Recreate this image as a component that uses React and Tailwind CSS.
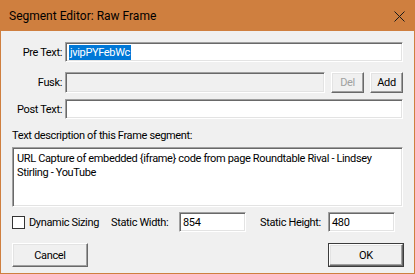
import React from 'react';

const font = { fontFamily: 'Roboto, "Noto Sans", sans-serif' };

const sunken = 'bg-white border border-t-[#a0a0a0] border-l-[#a0a0a0] border-b-white border-r-white shadow-[inset_1px_1px_0_#696969,inset_-1px_-1px_0_#e3e3e3]';
const raised = 'bg-[#f0f0f0] border border-t-white border-l-white border-b-[#696969] border-r-[#696969] shadow-[inset_-1px_-1px_0_#a0a0a0,inset_1px_1px_0_#e3e3e3]';

function Field({ className = '', children }) {
    return (
        <div className={`${sunken} h-[20px] flex items-center pl-[3px] text-black whitespace-nowrap ${className}`}>
            {children}
        </div>
    );
}

export default function App() {
    return (
        <div style={font} className="w-[415px] h-[274px] flex flex-col bg-[#cf7f3f] text-[11px] tracking-[-0.35px] text-black leading-none select-none whitespace-nowrap">
            {/* Title bar */}
            <div className="h-[31px] flex items-center justify-between pl-[9px] pr-[10px]">
                <span className="text-[12px] tracking-[0px] text-black">Segment Editor: Raw Frame</span>
                <svg width="11" height="11" viewBox="0 0 11 11" className="mt-[2px]">
                    <path d="M0.5 0.5 L10.5 10.5 M10.5 0.5 L0.5 10.5" stroke="#1a1a1a" strokeWidth="1" />
                </svg>
            </div>

            {/* Body */}
            <div className="flex-1 mx-[1px] mb-[1px] bg-[#f0f0f0] flex flex-col pt-[11px]">
                {/* Pre Text */}
                <div className="flex items-center h-[20px]">
                    <span className="w-[62px] text-right pr-[1px]">Pre Text:</span>
                    <Field className="ml-[2px] w-[338px]">
                        <span className="bg-[#0078d7] text-white px-[1px] h-[15px] flex items-center">jvipPYFebWc</span>
                    </Field>
                </div>

                {/* Fusk */}
                <div className="flex items-center h-[21px] mt-[10px]">
                    <span className="w-[62px] text-right pr-[1px]">Fusk:</span>
                    <div className="ml-[2px] w-[260px] h-[21px] bg-[#f0f0f0] border border-t-[#a0a0a0] border-l-[#a0a0a0] border-b-white border-r-white shadow-[inset_1px_1px_0_#696969,inset_-1px_-1px_0_#e3e3e3]" />
                    <div className={`${raised} ml-[6px] w-[33px] h-[21px] flex items-center justify-center text-[#a0a0a0]`}>Del</div>
                    <div className={`${raised} ml-[6px] w-[33px] h-[21px] flex items-center justify-center`}>Add</div>
                </div>

                {/* Post Text */}
                <div className="flex items-center h-[20px] mt-[6px]">
                    <span className="w-[62px] text-right pr-[1px]">Post Text:</span>
                    <Field className="ml-[2px] w-[338px]" />
                </div>

                {/* Description */}
                <div className="ml-[11px] mt-[9px] h-[14px] flex items-center">Text description of this Frame segment:</div>
                <div className={`${sunken} ml-[11px] mt-[5px] w-[391px] h-[60px] pl-[4px] pr-[2px] pt-[4px] leading-[13.5px] whitespace-normal`}>
                    URL Capture of embedded {'{iframe}'} code from page Roundtable Rival - Lindsey Stirling - YouTube
                </div>

                {/* Sizing row */}
                <div className="flex items-center h-[20px] mt-[5px] ml-[11px]">
                    <div className="w-[13px] h-[13px] bg-white border border-[#333333]" />
                    <span className="ml-[4px] w-[82px]">Dynamic Sizing</span>
                    <span className="w-[68px]">Static Width:</span>
                    <Field className="w-[67px]">854</Field>
                    <span className="ml-[14px] w-[68px]">Static Height:</span>
                    <Field className="w-[67px]">480</Field>
                </div>

                {/* Buttons */}
                <div className="flex justify-between mt-[11px] ml-[11px] mr-[10px]">
                    <div className={`${raised} w-[76px] h-[24px] flex items-center justify-center`}>Cancel</div>
                    <div className="w-[76px] h-[24px] border border-[#3c3c3c]">
                        <div className={`${raised} w-full h-full flex items-center justify-center`}>OK</div>
                    </div>
                </div>
            </div>
        </div>
    );
}
